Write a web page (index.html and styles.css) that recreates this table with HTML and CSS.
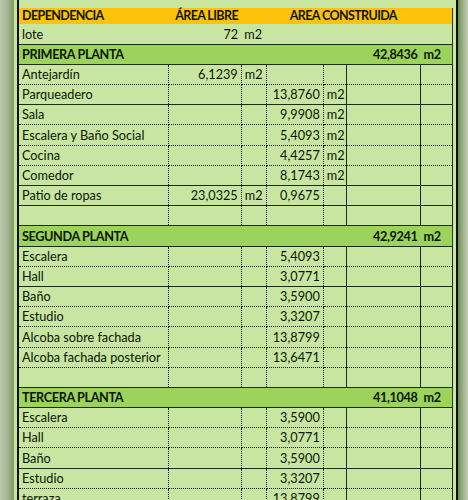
FILE: index.html
```html
<!DOCTYPE html>
<html lang="es">
<head>
    <meta charset="UTF-8">
    <meta name="viewport" content="width=device-width, initial-scale=1.0">
    <title>Cuadro de áreas</title>
    <link rel="stylesheet" href="styles.css">
</head>
<body>
    <div class="frame">
        <div class="bevel bevel-left"></div>
        <div class="sheet">
            <table class="areas">
                <colgroup>
                    <col class="c-name">
                    <col class="c-free">
                    <col class="c-unit">
                    <col class="c-built">
                    <col class="c-unit2">
                    <col class="c-total">
                    <col class="c-unit3">
                </colgroup>
                <tr class="head">
                    <td class="name">DEPENDENCIA</td>
                    <td colspan="2" class="head-free">ÁREA LIBRE</td>
                    <td colspan="3" class="head-built">AREA CONSTRUIDA</td>
                    <td></td>
                </tr>
                <tr class="lote solid">
                    <td class="name">lote</td>
                    <td class="free">72</td>
                    <td class="unit">m2</td>
                    <td colspan="4"></td>
                </tr>
                <tr class="floor solid">
                    <td colspan="5" class="name">PRIMERA PLANTA</td>
                    <td class="total">42,8436</td>
                    <td class="total-unit">m2</td>
                </tr>
                <tr class="row">
                    <td class="name">Antejardín</td>
                    <td class="free">6,1239</td>
                    <td class="unit">m2</td>
                    <td class="built"></td>
                    <td class="unit2"></td>
                    <td class="blank"></td>
                    <td class="blank"></td>
                </tr>
                <tr class="row solid">
                    <td class="name">Parqueadero</td>
                    <td class="free"></td>
                    <td class="unit"></td>
                    <td class="built">13,8760</td>
                    <td class="unit2">m2</td>
                    <td class="blank"></td>
                    <td class="blank"></td>
                </tr>
                <tr class="row">
                    <td class="name">Sala</td>
                    <td class="free"></td>
                    <td class="unit"></td>
                    <td class="built">9,9908</td>
                    <td class="unit2">m2</td>
                    <td class="blank"></td>
                    <td class="blank"></td>
                </tr>
                <tr class="row">
                    <td class="name">Escalera y Baño Social</td>
                    <td class="free"></td>
                    <td class="unit"></td>
                    <td class="built">5,4093</td>
                    <td class="unit2">m2</td>
                    <td class="blank"></td>
                    <td class="blank"></td>
                </tr>
                <tr class="row">
                    <td class="name">Cocina</td>
                    <td class="free"></td>
                    <td class="unit"></td>
                    <td class="built">4,4257</td>
                    <td class="unit2">m2</td>
                    <td class="blank"></td>
                    <td class="blank"></td>
                </tr>
                <tr class="row solid">
                    <td class="name">Comedor</td>
                    <td class="free"></td>
                    <td class="unit"></td>
                    <td class="built">8,1743</td>
                    <td class="unit2">m2</td>
                    <td class="blank"></td>
                    <td class="blank"></td>
                </tr>
                <tr class="row solid">
                    <td class="name">Patio de ropas</td>
                    <td class="free">23,0325</td>
                    <td class="unit">m2</td>
                    <td class="built">0,9675</td>
                    <td class="unit2"></td>
                    <td class="blank"></td>
                    <td class="blank"></td>
                </tr>
                <tr class="row solid">
                    <td class="name"></td>
                    <td class="free"></td>
                    <td class="unit"></td>
                    <td class="built"></td>
                    <td class="unit2"></td>
                    <td class="blank"></td>
                    <td class="blank"></td>
                </tr>
                <tr class="floor solid">
                    <td colspan="5" class="name">SEGUNDA PLANTA</td>
                    <td class="total">42,9241</td>
                    <td class="total-unit">m2</td>
                </tr>
                <tr class="row">
                    <td class="name">Escalera</td>
                    <td class="free"></td>
                    <td class="unit"></td>
                    <td class="built">5,4093</td>
                    <td class="unit2"></td>
                    <td class="blank"></td>
                    <td class="blank"></td>
                </tr>
                <tr class="row solid">
                    <td class="name">Hall</td>
                    <td class="free"></td>
                    <td class="unit"></td>
                    <td class="built">3,0771</td>
                    <td class="unit2"></td>
                    <td class="blank"></td>
                    <td class="blank"></td>
                </tr>
                <tr class="row">
                    <td class="name">Baño</td>
                    <td class="free"></td>
                    <td class="unit"></td>
                    <td class="built">3,5900</td>
                    <td class="unit2"></td>
                    <td class="blank"></td>
                    <td class="blank"></td>
                </tr>
                <tr class="row">
                    <td class="name">Estudio</td>
                    <td class="free"></td>
                    <td class="unit"></td>
                    <td class="built">3,3207</td>
                    <td class="unit2"></td>
                    <td class="blank"></td>
                    <td class="blank"></td>
                </tr>
                <tr class="row">
                    <td class="name">Alcoba sobre fachada</td>
                    <td class="free"></td>
                    <td class="unit"></td>
                    <td class="built">13,8799</td>
                    <td class="unit2"></td>
                    <td class="blank"></td>
                    <td class="blank"></td>
                </tr>
                <tr class="row">
                    <td class="name">Alcoba fachada posterior</td>
                    <td class="free"></td>
                    <td class="unit"></td>
                    <td class="built">13,6471</td>
                    <td class="unit2"></td>
                    <td class="blank"></td>
                    <td class="blank"></td>
                </tr>
                <tr class="row solid">
                    <td class="name"></td>
                    <td class="free"></td>
                    <td class="unit"></td>
                    <td class="built"></td>
                    <td class="unit2"></td>
                    <td class="blank"></td>
                    <td class="blank"></td>
                </tr>
                <tr class="floor solid">
                    <td colspan="5" class="name">TERCERA PLANTA</td>
                    <td class="total">41,1048</td>
                    <td class="total-unit">m2</td>
                </tr>
                <tr class="row">
                    <td class="name">Escalera</td>
                    <td class="free"></td>
                    <td class="unit"></td>
                    <td class="built">3,5900</td>
                    <td class="unit2"></td>
                    <td class="blank"></td>
                    <td class="blank"></td>
                </tr>
                <tr class="row">
                    <td class="name">Hall</td>
                    <td class="free"></td>
                    <td class="unit"></td>
                    <td class="built">3,0771</td>
                    <td class="unit2"></td>
                    <td class="blank"></td>
                    <td class="blank"></td>
                </tr>
                <tr class="row solid">
                    <td class="name">Baño</td>
                    <td class="free"></td>
                    <td class="unit"></td>
                    <td class="built">3,5900</td>
                    <td class="unit2"></td>
                    <td class="blank"></td>
                    <td class="blank"></td>
                </tr>
                <tr class="row">
                    <td class="name">Estudio</td>
                    <td class="free"></td>
                    <td class="unit"></td>
                    <td class="built">3,3207</td>
                    <td class="unit2"></td>
                    <td class="blank"></td>
                    <td class="blank"></td>
                </tr>
                <tr class="row">
                    <td class="name">terraza</td>
                    <td class="free"></td>
                    <td class="unit"></td>
                    <td class="built">13,8799</td>
                    <td class="unit2"></td>
                    <td class="blank"></td>
                    <td class="blank"></td>
                </tr>
            </table>
        </div>
        <div class="bevel bevel-right"></div>
    </div>
</body>
</html>
```

FILE: styles.css
```css
body {
    margin: 0;
    height: 500px;
    overflow: hidden;
    background: #c8e6a2;
    font-family: Lato, "Open Sans", sans-serif;
    font-size: 12.7px;
    color: #0b1605;
}

.frame {
    display: flex;
    height: 500px;
}

.bevel {
    width: 14px;
    flex: none;
}

.bevel-left {
    background: linear-gradient(to right, #bcc8ae, #a6b794 50%, #7f9a66);
    margin-right: 3px;
}

.bevel-right {
    width: 10px;
    background: linear-gradient(to right, #6f8b58, #9db486 50%, #c0ccb2);
}

.sheet {
    border-left: 2px solid #0c1208;
    border-right: 2px solid #0c1208;
    padding: 8px 3px 0 0;
    background: #c8e6a2;
}

/* spreadsheet grid */
.areas {
    border-collapse: collapse;
    table-layout: fixed;
    width: 434px;
    border-right: 1px solid #2b3a20;
}

.c-name { width: 149px; }
.c-free { width: 73px; }
.c-unit { width: 25px; }
.c-built { width: 57px; }
.c-unit2 { width: 23px; }
.c-total { width: 74px; }
.c-unit3 { width: 32px; }

.areas tr {
    height: 20.2px;
}

.areas td {
    padding: 0 3px 2px;
    white-space: nowrap;
    overflow: visible;
    vertical-align: bottom;
    line-height: 16px;
    border-bottom: 1px dotted #1a1a1a;
}

.areas tr.solid td {
    border-bottom: 1px solid #1d2a14;
}

.areas tr.head {
    height: 16px;
}

.head td {
    padding-bottom: 0;
    background: #ffc20a;
    font-weight: bold;
    font-size: 12.5px;
    letter-spacing: -0.6px;
    border-bottom: none;
}

.head .head-free {
    padding-left: 7px;
}

.head .head-built {
    text-align: center;
}

.floor td {
    background: #9bd35d;
    font-weight: bold;
    letter-spacing: -0.4px;
}

.row .name,
.row .free,
.row .unit,
.row .built {
    border-right: 1px dotted #1a1a1a;
}

.row .unit2,
.row .blank {
    border-right: 1px solid #1d2a14;
}

.free,
.built,
.total {
    text-align: right;
}

.free { padding-right: 5px; }
.unit { padding-left: 2px; }
.built { padding-right: 6px; }
.unit2 { padding-left: 3px; }
.total { padding-right: 9px; }
.total-unit { padding-left: 6px; }
```
